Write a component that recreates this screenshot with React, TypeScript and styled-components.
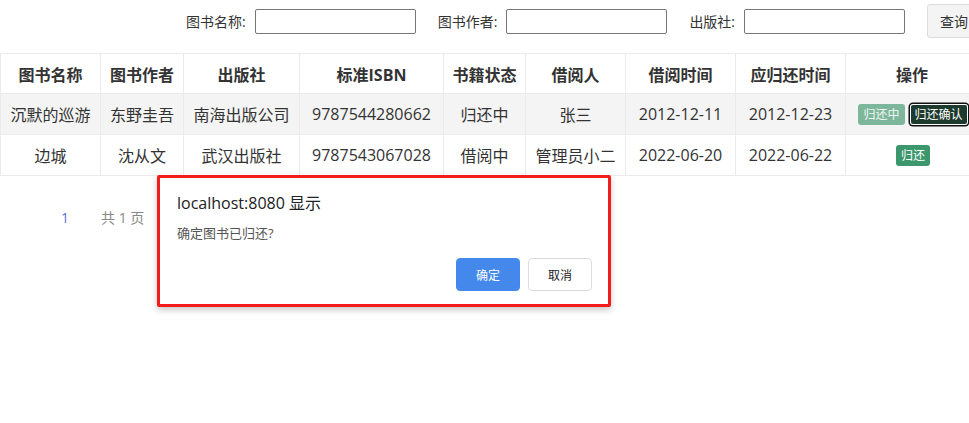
import React from "react";
import styled, { createGlobalStyle, css } from "styled-components";

const Global = createGlobalStyle`
  html, body {
    margin: 0;
    padding: 0;
    overflow: hidden;
    background: #fff;
  }
  body {
    font-family: "Open Sans", "Noto Sans CJK SC", sans-serif;
    color: #333;
  }
`;

const Page = styled.div`
  position: relative;
  width: 978px;
  min-height: 423px;
`;

const SearchBar = styled.div`
  display: flex;
  align-items: center;
  height: 42px;
  padding-left: 186px;
  gap: 22px;
`;

const Field = styled.label`
  display: flex;
  align-items: center;
  gap: 9px;
  font-size: 14px;
  color: #333;
  white-space: nowrap;
`;

const Input = styled.input`
  box-sizing: border-box;
  width: 161px;
  height: 25px;
  border: 1px solid #767676;
  border-radius: 2px;
  padding: 1px 4px;
  font-size: 13px;
  outline: none;
`;

const QueryButton = styled.button`
  box-sizing: border-box;
  height: 34px;
  padding: 0 12px;
  border: 1px solid #dcdcdc;
  border-radius: 3px;
  background: #f4f4f4;
  font-family: inherit;
  font-size: 14px;
  color: #333;
  white-space: nowrap;
`;

const Table = styled.table`
  margin-top: 11px;
  width: 978px;
  table-layout: fixed;
  border-collapse: collapse;
`;

const Th = styled.th`
  height: 39px;
  padding: 0 4px;
  border: 1px solid #ebebeb;
  font-size: 16px;
  font-weight: 700;
  color: #333;
  text-align: center;
  white-space: nowrap;
`;

const Tr = styled.tr<{ $hover?: boolean }>`
  background: ${(p) => (p.$hover ? "#f4f4f4" : "#fff")};
`;

const Td = styled.td`
  height: 40px;
  padding: 0 4px;
  border: 1px solid #ebebeb;
  font-size: 16px;
  color: #333;
  text-align: center;
  white-space: nowrap;
`;

const Actions = styled.div`
  display: flex;
  justify-content: center;
  gap: 5px;
  padding-left: 2px;
`;

type Variant = "pending" | "focused" | "normal";

const ActionButton = styled.button<{ $variant: Variant }>`
  box-sizing: border-box;
  height: 21px;
  padding: 0 5px;
  border: none;
  border-radius: 3px;
  font-family: inherit;
  font-size: 12px;
  line-height: 21px;
  color: #fff;
  white-space: nowrap;
  ${(p) =>
    p.$variant === "pending" &&
    css`
      background: #7db79b;
      color: #f2f8f4;
    `}
  ${(p) =>
    p.$variant === "normal" &&
    css`
      background: #3d976d;
    `}
  ${(p) =>
    p.$variant === "focused" &&
    css`
      background: #1c3a2d;
      box-shadow: inset 0 0 0 1px #fff, 0 0 0 1.5px #111;
    `}
`;

const Pagination = styled.div`
  display: flex;
  gap: 32px;
  padding: 32px 0 0 61px;
  font-size: 14px;
  line-height: 20px;
`;

const PageNum = styled.span`
  color: #5a70d6;
`;

const PageTotal = styled.span`
  color: #888;
`;

const Dialog = styled.div`
  position: absolute;
  top: 175px;
  left: 157px;
  box-sizing: border-box;
  width: 454px;
  height: 132px;
  border: 3px solid #f21c1c;
  border-radius: 2px;
  background: #fff;
  box-shadow: 0 3px 6px rgba(0, 0, 0, 0.22);
  padding: 14px 16px 13px 17px;
  display: flex;
  flex-direction: column;
`;

const DialogTitle = styled.div`
  font-size: 16px;
  line-height: 22px;
  color: #202124;
`;

const DialogMessage = styled.div`
  margin-top: 10px;
  font-size: 13px;
  line-height: 18px;
  color: #555;
`;

const DialogButtons = styled.div`
  margin-top: auto;
  display: flex;
  justify-content: flex-end;
  gap: 8px;
`;

const DialogButton = styled.button<{ $primary?: boolean }>`
  box-sizing: border-box;
  width: 64px;
  height: 33px;
  border-radius: 4px;
  font-family: inherit;
  font-size: 12px;
  border: 1px solid ${(p) => (p.$primary ? "#4388ea" : "#dadce0")};
  background: ${(p) => (p.$primary ? "#4388ea" : "#fff")};
  color: ${(p) => (p.$primary ? "#fff" : "#202124")};
`;

const widths = [100, 83, 116, 144, 82, 100, 110, 110, 133];
const headers = [
  "图书名称",
  "图书作者",
  "出版社",
  "标准ISBN",
  "书籍状态",
  "借阅人",
  "借阅时间",
  "应归还时间",
  "操作",
];

type Row = {
  name: string;
  author: string;
  publisher: string;
  isbn: string;
  status: string;
  borrower: string;
  borrowDate: string;
  dueDate: string;
  returning: boolean;
};

const rows: Row[] = [
  {
    name: "沉默的巡游",
    author: "东野圭吾",
    publisher: "南海出版公司",
    isbn: "9787544280662",
    status: "归还中",
    borrower: "张三",
    borrowDate: "2012-12-11",
    dueDate: "2012-12-23",
    returning: true,
  },
  {
    name: "边城",
    author: "沈从文",
    publisher: "武汉出版社",
    isbn: "9787543067028",
    status: "借阅中",
    borrower: "管理员小二",
    borrowDate: "2022-06-20",
    dueDate: "2022-06-22",
    returning: false,
  },
];

export default function App() {
  return (
    <Page>
      <Global />
      <SearchBar>
        <Field>
          图书名称:
          <Input />
        </Field>
        <Field>
          图书作者:
          <Input />
        </Field>
        <Field>
          出版社:
          <Input />
        </Field>
        <QueryButton>查询</QueryButton>
      </SearchBar>

      <Table>
        <colgroup>
          {widths.map((w, i) => (
            <col key={i} style={{ width: w }} />
          ))}
        </colgroup>
        <thead>
          <tr>
            {headers.map((h) => (
              <Th key={h}>{h}</Th>
            ))}
          </tr>
        </thead>
        <tbody>
          {rows.map((r, i) => (
            <Tr key={r.isbn} $hover={i === 0}>
              <Td>{r.name}</Td>
              <Td>{r.author}</Td>
              <Td>{r.publisher}</Td>
              <Td>{r.isbn}</Td>
              <Td>{r.status}</Td>
              <Td>{r.borrower}</Td>
              <Td>{r.borrowDate}</Td>
              <Td>{r.dueDate}</Td>
              <Td>
                <Actions>
                  {r.returning ? (
                    <>
                      <ActionButton $variant="pending">归还中</ActionButton>
                      <ActionButton $variant="focused">归还确认</ActionButton>
                    </>
                  ) : (
                    <ActionButton $variant="normal">归还</ActionButton>
                  )}
                </Actions>
              </Td>
            </Tr>
          ))}
        </tbody>
      </Table>

      <Pagination>
        <PageNum>1</PageNum>
        <PageTotal>共 1 页</PageTotal>
      </Pagination>

      <Dialog>
        <DialogTitle>localhost:8080 显示</DialogTitle>
        <DialogMessage>确定图书已归还?</DialogMessage>
        <DialogButtons>
          <DialogButton $primary>确定</DialogButton>
          <DialogButton>取消</DialogButton>
        </DialogButtons>
      </Dialog>
    </Page>
  );
}
